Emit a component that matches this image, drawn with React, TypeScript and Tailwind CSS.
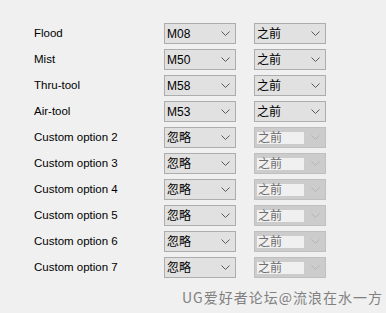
const rows = [
  { label: 'Flood', code: 'M08', enabled: true },
  { label: 'Mist', code: 'M50', enabled: true },
  { label: 'Thru-tool', code: 'M58', enabled: true },
  { label: 'Air-tool', code: 'M53', enabled: true },
  { label: 'Custom option 2', code: '忽略', enabled: false },
  { label: 'Custom option 3', code: '忽略', enabled: false },
  { label: 'Custom option 4', code: '忽略', enabled: false },
  { label: 'Custom option 5', code: '忽略', enabled: false },
  { label: 'Custom option 6', code: '忽略', enabled: false },
  { label: 'Custom option 7', code: '忽略', enabled: false },
];

const font = { fontFamily: '"Liberation Sans", "Noto Sans CJK SC", sans-serif' };

function Chevron({ disabled }: { disabled?: boolean }) {
  return (
    <svg width="9" height="5" viewBox="0 0 9 5" className="shrink-0" aria-hidden="true">
      <polyline
        points="0.5,0.5 4.5,4.5 8.5,0.5"
        fill="none"
        stroke={disabled ? '#b5b5b5' : '#5a5a5a'}
        strokeWidth="1"
      />
    </svg>
  );
}

function Combo({ value }: { value: string }) {
  return (
    <div className="flex h-[21px] w-[72px] items-center justify-between border border-[#adadad] bg-[#e1e1e1] pl-[2px] pr-[5px]">
      <span className="text-[12px] leading-none text-black">{value}</span>
      <Chevron />
    </div>
  );
}

function DisabledCombo({ value }: { value: string }) {
  return (
    <div className="flex h-[21px] w-[72px] items-center justify-between border border-[#bfbfbf] bg-[#cccccc] pl-[2px] pr-[5px]">
      <span className="flex h-[12px] w-[47px] items-center bg-[#f0f0f0] pl-[1px] text-[12px] leading-none text-[#6d6d6d]">
        {value}
      </span>
      <Chevron disabled />
    </div>
  );
}

export default function App() {
  return (
    <div className="relative h-[313px] w-[386px] bg-[#f0f0f0]" style={font}>
      <div className="flex flex-col gap-[5px] pl-[34px] pt-[23px]">
        {rows.map((r) => (
          <div key={r.label} className="flex items-center">
            <span className="w-[130px] text-[11.5px] leading-none text-black">{r.label}</span>
            <Combo value={r.code} />
            <div className="w-[18px]" />
            {r.enabled ? <Combo value="之前" /> : <DisabledCombo value="之前" />}
          </div>
        ))}
      </div>
      <div
        className="absolute bottom-[5px] right-[3px] text-[14px] tracking-[1px] text-[#808080]"
        style={{ fontFamily: '"Noto Sans CJK SC", serif' }}
      >
        UG爱好者论坛@流浪在水一方
      </div>
    </div>
  );
}
